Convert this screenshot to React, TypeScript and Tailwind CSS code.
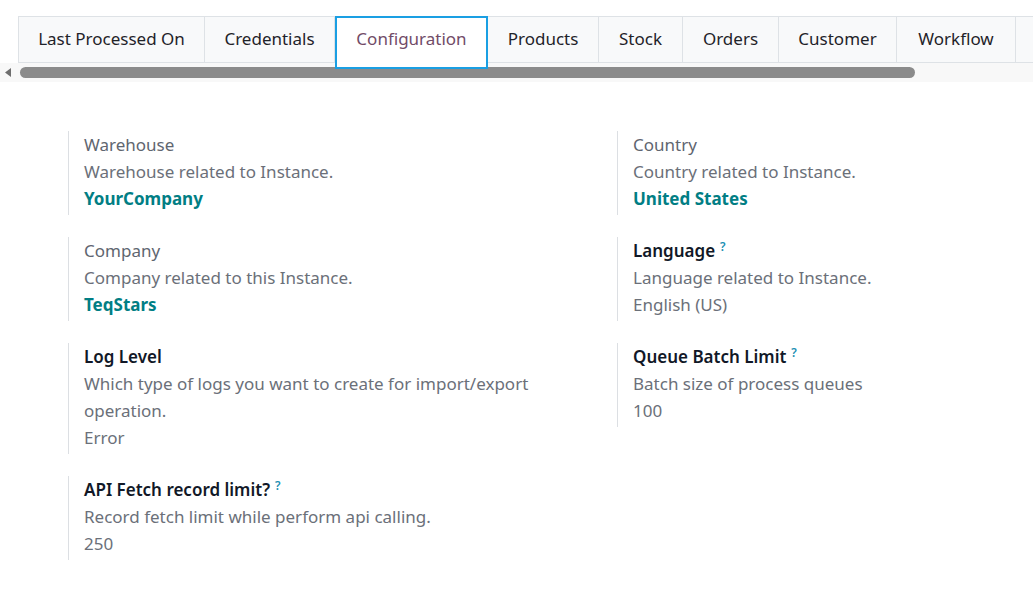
import React from "react";

type Field = {
  label: string;
  strong?: boolean;
  help?: boolean;
  desc: string;
  value: string;
  link?: boolean;
};

const tabs = [
  { name: "Last Processed On", w: "w-[187px]" },
  { name: "Credentials", w: "w-[130px]" },
  { name: "Configuration", w: "w-[153px]", active: true },
  { name: "Products", w: "w-[111px]" },
  { name: "Stock", w: "w-[84px]" },
  { name: "Orders", w: "w-[96px]" },
  { name: "Customer", w: "w-[118px]" },
  { name: "Workflow", w: "w-[119px]" },
  { name: "", w: "w-[90px]" },
];

const leftFields: Field[] = [
  { label: "Warehouse", desc: "Warehouse related to Instance.", value: "YourCompany", link: true },
  { label: "Company", desc: "Company related to this Instance.", value: "TeqStars", link: true },
  {
    label: "Log Level",
    strong: true,
    desc: "Which type of logs you want to create for import/export operation.",
    value: "Error",
  },
  {
    label: "API Fetch record limit?",
    strong: true,
    help: true,
    desc: "Record fetch limit while perform api calling.",
    value: "250",
  },
];

const rightFields: Field[] = [
  { label: "Country", desc: "Country related to Instance.", value: "United States", link: true },
  { label: "Language", strong: true, help: true, desc: "Language related to Instance.", value: "English (US)" },
  { label: "Queue Batch Limit", strong: true, help: true, desc: "Batch size of process queues", value: "100" },
];

function FieldBlock({ field }: { field: Field }) {
  return (
    <div className="border-l border-[#dcdfe3] pl-[15px] pb-[3px] pr-4">
      <div
        className={
          field.strong
            ? "font-semibold text-[#111827]"
            : "text-[#5f6670]"
        }
      >
        {field.label}
        {field.help && (
          <sup className="ml-[5px] text-[12px] font-semibold text-[#1b8fb3]">?</sup>
        )}
      </div>
      <div className="text-[#6b7079]">{field.desc}</div>
      <div
        className={
          field.link ? "font-bold text-[#017e84]" : "text-[#6b7079]"
        }
      >
        {field.value}
      </div>
    </div>
  );
}

export default function App() {
  return (
    <div
      className="w-[1033px] h-[595px] overflow-hidden bg-white text-[17px] leading-[27px]"
      style={{ fontFamily: '"Noto Sans", "Open Sans", sans-serif' }}
    >
      {/* notebook tabs */}
      <div className="pt-[16px] leading-[26.5px]">
        <div className="flex items-start pl-[18px] whitespace-nowrap">
          {tabs.map((t, i) =>
            t.active ? (
              <div
                key={i}
                className={`${t.w} relative z-10 h-[53px] mb-[-6px] shrink-0 border-2 border-[#1a9fe3] bg-white pt-[8px] text-center text-[#714b67]`}
              >
                {t.name}
              </div>
            ) : (
              <div
                key={i}
                className={`${t.w} h-[47px] shrink-0 flex items-center justify-center border-y border-r border-[#dee2e6] bg-[#f8f9fa] text-[#1f2329] ${
                  i === 0 ? "border-l" : ""
                }`}
              >
                {t.name}
              </div>
            )
          )}
        </div>

        {/* horizontal scrollbar */}
        <div className="flex h-[19px] items-center bg-[#f8f8f8]">
          <svg width="20" height="19" viewBox="0 0 20 19" className="shrink-0">
            <path d="M11 5 L5 9.5 L11 14 Z" fill="#6e6e6e" />
          </svg>
          <div className="h-[11px] w-[895px] rounded-full bg-[#8b8b8b]" />
        </div>
      </div>

      {/* configuration fields */}
      <div className="grid grid-cols-[549px_1fr] pl-[68px] pt-[49px]">
        <div className="flex flex-col gap-[22px]">
          {leftFields.map((f) => (
            <FieldBlock key={f.label} field={f} />
          ))}
        </div>
        <div className="flex flex-col gap-[22px]">
          {rightFields.map((f) => (
            <FieldBlock key={f.label} field={f} />
          ))}
        </div>
      </div>
    </div>
  );
}
